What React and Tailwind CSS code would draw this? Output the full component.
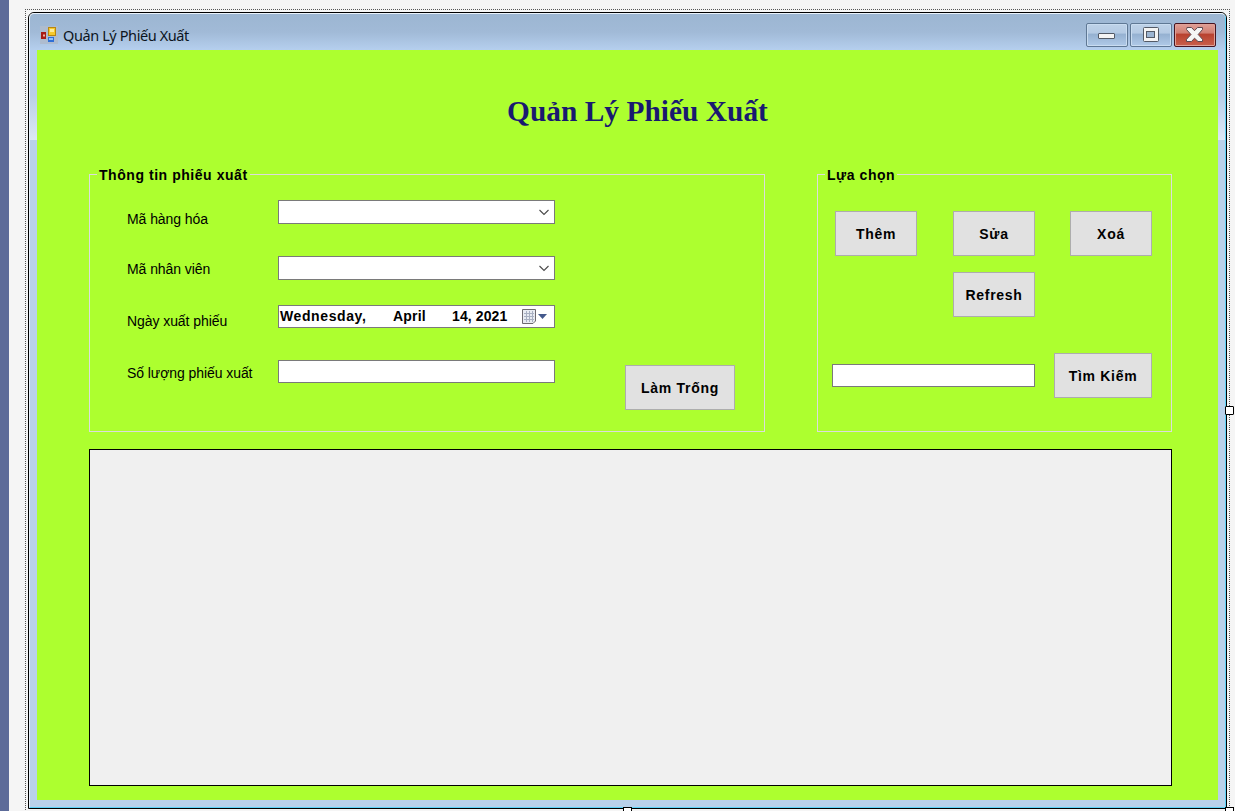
import React from "react";

function AppIcon() {
  return (
    <svg width="18" height="18" viewBox="0 0 18 18" className="shrink-0">
      <rect width="18" height="18" fill="#aebccf" />
      <rect x="1" y="6" width="5" height="7" fill="#a81c14" />
      <rect x="3" y="8.5" width="2" height="2" fill="#f0b0a0" />
      <rect x="8" y="1" width="8" height="9" fill="#b8860f" />
      <rect x="9" y="2" width="6" height="7" fill="#f6c92c" />
      <rect x="10" y="3" width="4" height="3" fill="#fdeb98" />
      <rect x="8" y="11" width="6" height="5" fill="#2f6fd6" />
      <rect x="9" y="12" width="4" height="2" fill="#8ec2fb" />
    </svg>
  );
}

function CaptionButton({ close, children }) {
  return (
    <button
      className={
        close
          ? "flex h-6 w-[42px] items-center justify-center rounded-[2px] border border-[#471420] bg-[linear-gradient(#e0a097_0,#d07c70_42%,#b8402e_45%,#c9604c_100%)] shadow-[inset_0_0_0_1px_#dfa197]"
          : "flex h-6 w-[42px] items-center justify-center rounded-[2px] border border-[#5f7894] bg-[linear-gradient(#bed2e8_0,#b4cae3_42%,#94b0d0_45%,#b0cae8_100%)] shadow-[inset_0_0_0_1px_#c9dcf0]"
      }
    >
      {children}
    </button>
  );
}

function TitleBar() {
  return (
    <header className="flex h-9 shrink-0 items-start bg-linear-to-b from-[#9cb6d2] via-[#a1bad7] to-[#b5cfee] pl-[10px] pr-[9px]">
      <div className="flex grow items-start gap-[5px] pt-[11px]">
        <div className="pt-px">
          <AppIcon />
        </div>
        <span className="whitespace-nowrap font-['Noto_Sans',sans-serif] text-[14.5px] leading-5 tracking-[-0.4px] text-[#0c1420]">
          Quản Lý Phiếu Xuất
        </span>
      </div>
      <div className="flex gap-[2px] pt-[9px]">
        <CaptionButton>
          <svg width="20" height="16" viewBox="0 0 20 16">
            <rect x="1.5" y="6.5" width="16" height="5" rx="0.5" fill="#f4f4f4" stroke="#535a66" />
          </svg>
        </CaptionButton>
        <CaptionButton>
          <svg width="18" height="16" viewBox="0 0 18 16">
            <rect x="1.5" y="0.5" width="15" height="14" rx="1" fill="#f4f4f4" stroke="#535a66" />
            <rect x="4.5" y="4.5" width="8" height="6" fill="#9cb5d2" stroke="#535a66" />
          </svg>
        </CaptionButton>
        <CaptionButton close>
          <svg width="20" height="16" viewBox="0 0 20 16">
            <path
              d="M2 0.5H6.5L9.5 3.7L12.5 0.5H17.5V2.5L13.2 7.5L17.5 12.3V14.5H13L9.5 11.2L6.5 14.5H1.5V12.3L6 7.5L1.5 2.5Z"
              fill="#f5f5f5"
              stroke="#5e4a50"
              strokeLinejoin="round"
            />
          </svg>
        </CaptionButton>
      </div>
    </header>
  );
}

function FrameSide() {
  return (
    <div className="flex w-[7px] shrink-0 flex-col">
      <div className="h-[90px] bg-linear-to-b from-[#b5cfee] via-[#b9cfe8] to-[#dde8f6]" />
      <div className="grow bg-[#b9d1ea]" />
    </div>
  );
}

function GroupBox({ title, className, children }) {
  return (
    <fieldset className={`h-[267px] shrink-0 border border-[#dcdcdc] ${className}`}>
      <legend className="ml-[7px] whitespace-nowrap px-[2px] pt-px text-[14px] font-bold leading-[18px] tracking-[0.55px]">
        {title}
      </legend>
      {children}
    </fieldset>
  );
}

function Button({ className, children }) {
  return (
    <button
      className={`flex h-[45px] shrink-0 items-center justify-center whitespace-nowrap border border-[#adadad] bg-[#e1e1e1] pt-[2px] text-[14px] font-bold tracking-[0.7px] ${className}`}
    >
      {children}
    </button>
  );
}

function Combo() {
  return (
    <div className="flex h-6 w-[277px] items-center justify-end border border-[#7a7a7a] bg-white pr-[4px]">
      <svg width="12" height="8" viewBox="0 0 12 8">
        <path d="M1.5 2L6 6.5L10.5 2" fill="none" stroke="#4a4a4a" strokeWidth="1.1" />
      </svg>
    </div>
  );
}

function DateField() {
  return (
    <div className="mt-[25px] flex h-[23px] w-[277px] items-center whitespace-nowrap border border-[#7a7a7a] bg-white pl-px text-[14px] font-bold tracking-[0.6px]">
      <span className="w-[113px]">Wednesday,</span>
      <span className="w-[59px] tracking-[0.2px]">April</span>
      <span className="w-[69px] tracking-[0.1px]">14, 2021</span>
      <svg width="28" height="18" viewBox="0 0 28 18">
        <path d="M1.5 1.5H14.5V13L12 15.5H1.5Z" fill="#e8ebf2" stroke="#6d6a70" />
        <path d="M3 5.5H13M3 8.5H13M3 11.5H13M5.5 3V14M8.5 3V14M11.5 3V14" stroke="#a9b0c2" />
        <path d="M17 6H26L21.5 11Z" fill="#44598c" />
      </svg>
    </div>
  );
}

export default function App() {
  return (
    <div className="flex h-[811px] w-[1235px] overflow-hidden bg-[#f5f5f5] font-['Liberation_Sans',Arial,sans-serif] text-black">
      <div className="w-[9px] shrink-0 bg-[#5d6b99]" />
      <div className="relative ml-4 mt-[9px] h-[803px] w-[1205px] shrink-0 border border-dotted border-[#555] p-[2px]">
        <div className="flex h-[797px] w-[1199px] flex-col overflow-hidden rounded-t-[6px] border border-black">
          <div className="flex grow flex-col overflow-hidden rounded-t-[5px] border border-b-[#5cd3f7] border-l-[#e9f2fb] border-r-[#5cd3f7] border-t-[#e9f2fb]">
            <TitleBar />
            <div className="flex h-[750px] shrink-0">
              <FrameSide />
              <main className="flex w-[1181px] shrink-0 flex-col bg-[#adff2f]">
                <h1 className="mt-[41px] whitespace-nowrap pl-[20px] text-center font-['Liberation_Serif',serif] text-[29.33px] font-bold leading-10 tracking-[0.05px] text-[#191970]">
                  Quản Lý Phiếu Xuất
                </h1>
                <div className="mt-[34px] flex gap-[52px] pl-[52px]">
                  <GroupBox title="Thông tin phiếu xuất" className="w-[676px]">
                    <div className="flex">
                      <div className="flex w-[188px] flex-col gap-8 whitespace-nowrap pl-[37px] pt-[25px] text-[14px] leading-5 tracking-[-0.07px]">
                        <span className="-mb-[2px]">Mã hàng hóa</span>
                        <span>Mã nhân viên</span>
                        <span>Ngày xuất phiếu</span>
                        <span>Số lượng phiếu xuất</span>
                      </div>
                      <div className="flex w-[347px] flex-col pt-4">
                        <Combo />
                        <div className="h-8" />
                        <Combo />
                        <DateField />
                        <input className="mt-8 h-[23px] w-[277px] border border-[#7a7a7a] bg-white" />
                      </div>
                      <Button className="mt-[181px] w-[110px]">Làm Trống</Button>
                    </div>
                  </GroupBox>
                  <GroupBox title="Lựa chọn" className="w-[355px]">
                    <div className="flex pl-[17px] pt-[27px]">
                      <Button className="mr-9 w-[82px]">Thêm</Button>
                      <Button className="mr-[35px] w-[82px]">Sửa</Button>
                      <Button className="w-[82px]">Xoá</Button>
                    </div>
                    <div className="flex pl-[135px] pt-4">
                      <Button className="w-[82px]">Refresh</Button>
                    </div>
                    <div className="flex items-center gap-[19px] pl-[14px] pt-9">
                      <input className="h-[23px] w-[203px] border border-[#7a7a7a] bg-white" />
                      <Button className="w-[98px]">Tìm Kiếm</Button>
                    </div>
                  </GroupBox>
                </div>
                <section className="ml-[52px] mt-[17px] h-[337px] w-[1083px] border border-black bg-[#f0f0f0]" />
              </main>
              <FrameSide />
            </div>
            <div className="grow bg-[#b9d1ea]" />
          </div>
        </div>
        <div className="absolute left-[1199px] top-[396px] h-[9px] w-[9px] rounded-[1px] border border-black bg-white" />
        <div className="absolute left-[597px] top-[797px] h-[9px] w-[9px] border border-black bg-white" />
        <div className="absolute left-[1199px] top-[797px] h-[9px] w-[9px] border border-black bg-white" />
      </div>
    </div>
  );
}
